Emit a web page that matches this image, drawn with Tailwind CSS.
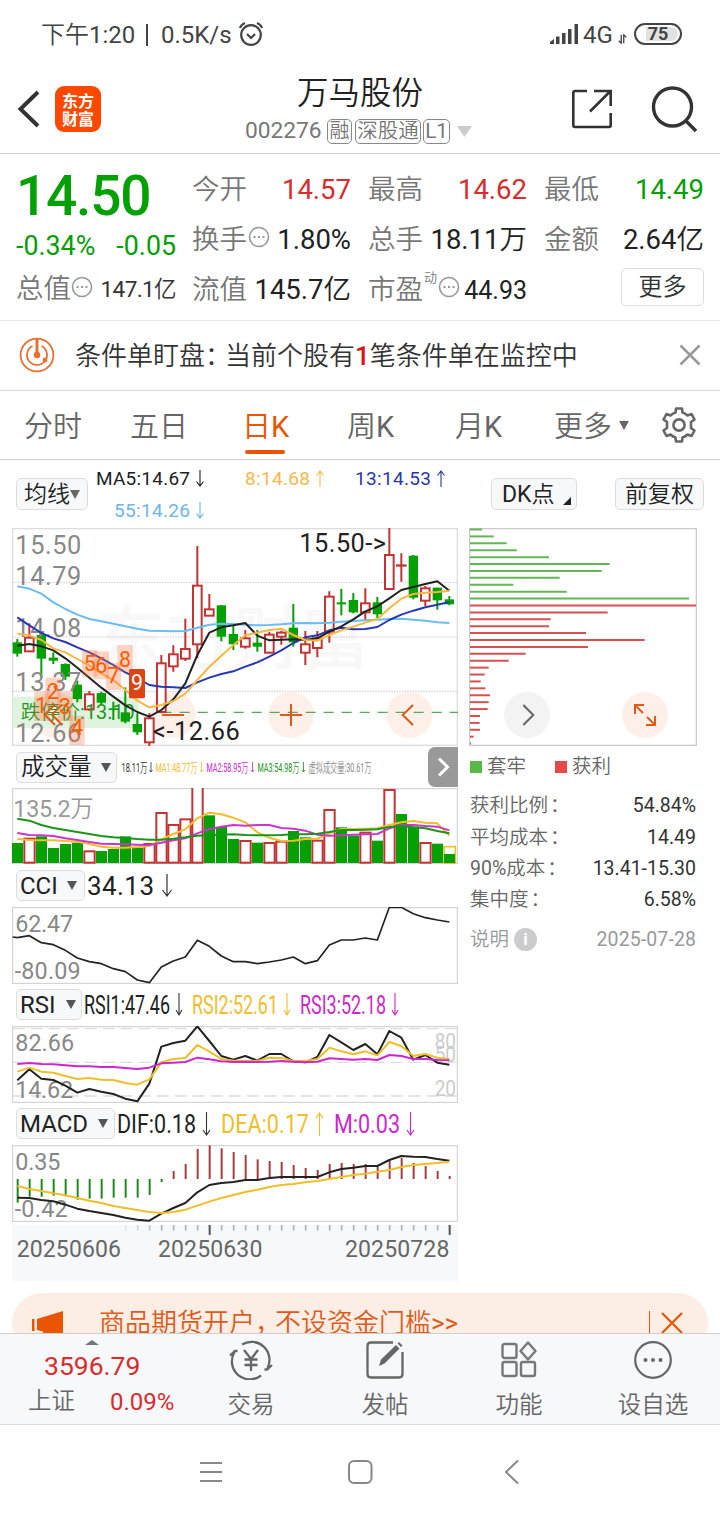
<!DOCTYPE html>
<html lang="zh-CN">
<head>
    <meta charset="UTF-8">
    <meta name="viewport" content="width=device-width, initial-scale=1.0">
    <title>万马股份 002276</title>
    <script src="https://cdn.jsdelivr.net/npm/@tailwindcss/browser@4"></script>
</head>
<body class="bg-white">
<div class="w-[720px] h-[1520px] overflow-hidden flex flex-col bg-white text-[#333] leading-none whitespace-nowrap font-normal font-['Roboto','Noto_Sans_CJK_SC_DemiLight','Noto_Sans_CJK_SC_Light','Noto_Sans_CJK_SC',sans-serif]">

    <!-- Status bar -->
    <div class="h-[70px] pl-[41px] pr-[38px] flex items-center shrink-0 text-[24px] text-[#444]">
        <span class="w-[95px]">下午1:20</span>
        <span class="w-0.5 h-[22px] bg-[#444] ml-2.5 mr-[13px]"></span>
        <span class="w-[75px]">0.5K/s</span>
        <svg class="w-7 h-7 ml-0.5 -mt-0.5" viewBox="0 0 28 28" fill="none" stroke="#444" stroke-width="2.2">
            <circle cx="13" cy="15" r="9.8"/><path d="M9 14l4 4 4-4M2 8a8 8 0 0 1 5-5M24 8a8 8 0 0 0-5-5"/>
        </svg>
        <svg class="w-[29px] h-5 ml-auto -mt-0.5" viewBox="0 0 29 20" fill="#444">
            <path d="M0 20v-2l4-3v5zM6 12.500h3.500V20H6zM12 9h3.500v11H12zM18 5h3.500v15H18zM24.500 0H28v20h-3.500z"/>
        </svg>
        <span class="ml-1 w-[32px]">4G</span>
        <svg class="w-[11px] h-[10px] mt-2 ml-0.5" viewBox="0 0 11 12" fill="none" stroke="#444" stroke-width="1.600"><path d="M4 1v10L1 8M7 11V1l3 3"/></svg>
        <span class="ml-[6px] -mt-0.5 w-[48px] h-[22px] border-[2.5px] border-[#444] rounded-full p-0.5 flex">
            <span class="flex-1 rounded-full bg-linear-to-r from-white from-20% to-[#e2e2e2] to-20% flex items-center justify-center text-[18px] font-bold">75</span>
        </span>
    </div>

    <!-- Header -->
    <div class="h-[84px] border-b border-[#d2d2d2] flex shrink-0 pl-[16px] pr-[21px]">
        <svg class="w-[26px] h-[40px] mt-[19px]" viewBox="0 0 26 40" fill="none" stroke="#333" stroke-width="4"><path d="M22 3L4.500 20 22 37"/></svg>
        <div class="w-[46px] h-[46px] ml-[13px] mt-[16px] rounded-[9px] bg-[#fd4900] text-white font-bold text-[16px] flex flex-col items-center justify-center gap-[2px] font-['Noto_Sans_CJK_SC',sans-serif]">
            <span>东方</span><span>财富</span>
        </div>
        <div class="ml-[144px] w-[227px] flex flex-col">
            <div class="text-[31.5px] h-[32px] mt-[8px] ml-[52px] text-[#222]">万马股份</div>
            <div class="flex items-center h-[26px] mt-[8px] text-[22.700px] text-[#777]">
                <span class="w-[77px]">002276</span>
                <span class="ml-[5px] w-[25px] h-[25px] border-[1.500px] border-[#888] rounded-[5px] text-[20px] flex items-center justify-center">融</span>
                <span class="ml-[3px] w-[66px] h-[25px] border-[1.500px] border-[#888] rounded-[5px] text-[20.500px] flex items-center justify-center">深股通</span>
                <span class="ml-[2px] w-[27px] h-[25px] border-[1.500px] border-[#888] rounded-[5px] text-[20.500px] flex items-center justify-center">L1</span>
                <svg class="w-[15px] h-[11px] ml-[7px] shrink-0" viewBox="0 0 15 11" fill="#ccc"><path d="M0 0h15L7.500 11z"/></svg>
            </div>
        </div>
        <svg class="w-[42px] h-[42px] ml-auto mt-[18px]" viewBox="0 0 42 42" fill="none" stroke="#333" stroke-width="2.600">
            <path d="M16 3H4q-1.700 0-1.700 1.700v32.600Q2.300 39 4 39h34q1.700 0 1.700-1.700V25M23 3h16.700v15M39.500 3L19 23.500"/>
        </svg>
        <svg class="w-[48px] h-[48px] ml-[38px] mt-[16px]" viewBox="0 0 48 48" fill="none" stroke="#333" stroke-width="3.400">
            <circle cx="21.500" cy="21" r="19"/><path d="M34.500 34.500L45 45"/>
        </svg>
    </div>

    <!-- Quote -->
    <div class="h-[167px] border-b border-[#e8e8e8] shrink-0 pl-[16px] pt-[10px] flex text-[27.500px] text-[#777]">
        <div class="w-[160px] flex flex-col">
            <div class="h-[65px] flex items-center text-[55px] font-medium text-[#04a004] tracking-[-1.2px]">14.50</div>
            <div class="h-[37px] -mt-px flex items-center justify-between text-[26.800px] text-[#04a004]"><span>-0.34%</span><span>-0.05</span></div>
            <div class="h-[46px] mt-px flex items-center justify-between">
                <span class="flex items-center">总值
                    <svg class="w-[22px] h-[22px] -mt-1" viewBox="0 0 22 22" fill="none" stroke="#999" stroke-width="1.600"><circle cx="11" cy="11" r="9.500"/><path d="M5.500 11h2m2.500 0h2m2.500 0h2" stroke-width="2"/></svg>
                </span>
                <span class="text-[22.500px] text-[#333] tracking-[-0.6px]">147.1亿</span>
            </div>
        </div>
        <div class="ml-[16px] pt-px w-[159px]">
            <div class="h-[50px] flex items-center justify-between">今开<span class="text-[#d92c2c]">14.57</span></div>
            <div class="h-[50px] flex items-center justify-between">
                <span class="flex items-center">换手
                    <svg class="w-[22px] h-[22px] -mt-1.5 ml-px" viewBox="0 0 22 22" fill="none" stroke="#999" stroke-width="1.600"><circle cx="11" cy="11" r="9.500"/><path d="M5.500 11h2m2.500 0h2m2.500 0h2" stroke-width="2"/></svg>
                </span>
                <span class="text-[#222]">1.80%</span>
            </div>
            <div class="h-[50px] flex items-center justify-between">流值<span class="text-[#222]">145.7亿</span></div>
        </div>
        <div class="ml-[17px] pt-px w-[159px]">
            <div class="h-[50px] flex items-center justify-between">最高<span class="text-[#d92c2c]">14.62</span></div>
            <div class="h-[50px] flex items-center justify-between">总手<span class="text-[#222]">18.11万</span></div>
            <div class="h-[50px] flex items-center justify-between">
                <span class="flex items-center">市盈<span class="text-[13px] -mt-[26px] ml-px">动</span>
                    <svg class="w-[22px] h-[22px] -mt-1.5 ml-px" viewBox="0 0 22 22" fill="none" stroke="#999" stroke-width="1.600"><circle cx="11" cy="11" r="9.500"/><path d="M5.500 11h2m2.500 0h2m2.500 0h2" stroke-width="2"/></svg>
                </span>
                <span class="text-[25px] text-[#222]">44.93</span>
            </div>
        </div>
        <div class="ml-[17px] pt-px w-[160px]">
            <div class="h-[50px] flex items-center justify-between">最低<span class="text-[#04a004]">14.49</span></div>
            <div class="h-[50px] flex items-center justify-between">金额<span class="text-[#222]">2.64亿</span></div>
            <div class="h-[46px] flex items-center justify-end">
                <span class="w-[83px] h-[38px] -mt-0.5 border border-[#ddd] rounded-[5px] text-[24px] text-[#333] flex items-center justify-center">更多</span>
            </div>
        </div>
    </div>

    <!-- Conditional order notice -->
    <div class="h-[70px] border-b border-[#d8d8d8] shrink-0 pl-[19px] pr-[19px] flex items-center text-[26px]">
        <svg class="w-9 h-9 -mt-0.5" viewBox="0 0 36 36" fill="none" stroke="#e8702e" stroke-width="1.800">
            <circle cx="18" cy="18" r="16.400"/><path d="M13.500 9a10 10 0 1 0 9 0"/><path d="M18 2v16" stroke-width="3"/><circle cx="18" cy="18" r="2.400" fill="#e8702e"/><circle cx="26" cy="23" r="1.500" fill="#e8702e"/>
        </svg>
        <span class="ml-[20px]">条件单盯盘</span><span class="w-5">：</span><span>当前个股有</span><span class="text-[#dd1111] font-medium">1</span><span>笔条件单在监控中</span>
        <svg class="w-[22px] h-[22px] ml-auto -mt-0.5" viewBox="0 0 22 22" fill="none" stroke="#999" stroke-width="2.500"><path d="M1.500 1.500l19 19M20.500 1.500l-19 19"/></svg>
    </div>

    <!-- Period tabs -->
    <div class="h-[69px] pt-[5px] border-b border-[#d2d2d2] shrink-0 flex items-center text-[29px] text-[#666] pl-[24px]">
        <span class="w-[106px]">分时</span>
        <span class="w-[112px]">五日</span>
        <span class="w-[105px] text-[#ea5504] relative">日K<span class="absolute left-[3px] top-[37px] w-[40px] h-[4px] rounded bg-[#ea5504]"></span></span>
        <span class="w-[108px]">周K</span>
        <span class="w-[99px]">月K</span>
        <span class="w-[58px]">更多</span>
        <svg class="w-[10px] h-[9px] ml-[7px] -mt-1" viewBox="0 0 11 10" fill="#666"><path d="M0 0h11L5.500 10z"/></svg>
        <svg class="w-[38px] h-[38px] ml-[31px] -mt-1.5" viewBox="0 0 38 38" fill="none" stroke="#666" stroke-width="2.600" stroke-linejoin="round">
            <path d="M15.500 6.500L16 2.500h6l.500 4q3 1 5 3l4-1.500 3 5.500-3.500 2.500v6l3.500 2.500-3 5.500-4-1.500q-2 2-5 3l-.500 4h-6l-.500-4q-3-1-5-3l-4 1.500-3-5.500L7 22v-6l-3.500-2.500 3-5.500 4 1.500q2-2 5-3z"/><circle cx="19" cy="19" r="5.600"/>
        </svg>
    </div>

    <!-- Moving average legend and chart options -->
    <div class="h-[68px] shrink-0 flex pl-[16px] pr-[16px] text-[23px] text-[#222]">
        <div class="w-[72px] h-[32px] mt-[18px] border border-[#ddd] bg-[#f7f8fa] rounded-[5px] flex items-center justify-center">均线<svg class="w-[10px] h-[9px]" viewBox="0 0 10 9" fill="#666"><path d="M0 0h10L5 9z"/></svg></div>
        <svg class="w-[372px] h-[68px]" viewBox="88 460 372 68" font-size="19">
            <text x="96" y="485" textLength="94" fill="#222">MA5:14.67</text>
            <text x="245" y="485" textLength="65" fill="#f8b84a">8:14.68</text>
            <text x="355" y="485" textLength="76" fill="#2838a8">13:14.53</text>
            <text x="114" y="517" textLength="76" fill="#6ab6ec">55:14.26</text>
            <g fill="none" stroke-width="1.100">
                <path d="M200 470v16m-3.500-4.500l3.500 4.500 3.500-4.500" stroke="#222"/>
                <path d="M320 487v-16m-3.500 4.500l3.500-4.500 3.500 4.500" stroke="#f8b84a"/>
                <path d="M441 487v-16m-3.500 4.500l3.500-4.500 3.500 4.500" stroke="#2838a8"/>
                <path d="M200 502v16m-3.500-4.500l3.500 4.500 3.500-4.500" stroke="#6ab6ec"/>
            </g>
        </svg>
        <div class="ml-[31px] w-[86px] h-[32px] mt-[18px] border border-[#ddd] bg-[#f7f8fa] rounded-[5px] flex items-center pl-[10px]">DK点<svg class="w-2 h-2 ml-[8px] mt-[14px]" viewBox="0 0 8 8" fill="#222"><path d="M8 0v8H0z"/></svg></div>
        <div class="ml-auto w-[89px] h-[32px] mt-[18px] border border-[#ddd] bg-[#f7f8fa] rounded-[5px] flex items-center justify-center">前复权</div>
    </div>

    <!-- Charts: every svg canvas uses three units per pixel -->
    <div class="flex shrink-0 h-[765px] pl-[12px]">
        <div class="w-[446px] flex flex-col">
            <svg class="w-[446px] h-[218px] shrink-0" viewBox="36 24 1338 654" font-size="76">
                <rect x="38" y="26" width="1334" height="650" fill="#fff" stroke="#ddd" stroke-width="4"/>
                <text x="290" y="430" font-size="205" font-weight="700" fill="#f8f8f8" textLength="820">东方财富</text>
                <path d="M38 187H1372M38 351H1372M38 514H1372" stroke="#c4c4c4" stroke-width="3" stroke-dasharray="4 4"/>
                <g fill="#fef0e9"><circle cx="165" cy="585" r="69"/><circle cx="519" cy="585" r="69"/><circle cx="873" cy="585" r="69"/><circle cx="1228" cy="585" r="69"/></g>
                <rect x="38" y="530" width="378" height="94" fill="#dff3df"/>
                <path d="M485 577H1374" stroke="#56a85a" stroke-width="4" stroke-dasharray="30 24"/>
                <g id="candles"></g>
                <text x="62" y="597" font-size="58" fill="#1f951f" textLength="342" lengthAdjust="spacingAndGlyphs">跌停价:13.10</text>
                <g fill="#888">
                    <text x="46" y="101" textLength="198">15.50</text><text x="46" y="195" textLength="198">14.79</text><text x="46" y="350" textLength="198">14.08</text><text x="46" y="514" textLength="198">13.37</text><text x="46" y="666" textLength="198">12.66</text>
                </g>
                <g id="priceLines" fill="none" stroke-width="6" stroke-linejoin="round"></g>
                <g fill="#fa6e3c" fill-opacity=".3">
                    <rect x="103" y="515" width="46" height="88"/><rect x="136" y="473" width="46" height="88"/><rect x="172" y="515" width="46" height="88"/><rect x="208" y="587" width="46" height="88"/><rect x="246" y="390" width="46" height="80"/><rect x="281" y="394" width="46" height="84"/><rect x="317" y="428" width="46" height="82"/><rect x="352" y="375" width="46" height="80"/>
                </g>
                <rect x="387" y="447" width="48" height="88" rx="5" fill="#de4314"/>
                <g font-size="64" fill="#ff5a00" text-anchor="middle">
                    <text x="124" y="580">1</text><text x="159" y="538">2</text><text x="195" y="583">3</text><text x="232" y="646">4</text><text x="269" y="454">5</text><text x="304" y="458">6</text><text x="340" y="490">7</text><text x="375" y="441">8</text><text x="411" y="511" fill="#fff">9</text>
                </g>
                <g fill="none" stroke="#dc5a1a" stroke-width="6">
                    <path d="M165 553l-31 31 31 31M187 553l-31 31 31 31M486 585h66M840 585h66M873 552v66M1239 555l-31 30 31 30"/>
                </g>
                <g fill="#222"><text x="898" y="95" textLength="260">15.50-&gt;</text><text x="459" y="661" textLength="260">&lt;-12.66</text></g>
            </svg>

            <!-- Volume -->
            <div class="h-[42px] shrink-0 flex">
                <div class="ml-1 mt-[6px] w-[101px] h-[31px] border border-[#ddd] bg-[#f7f8fa] rounded-[5px] flex items-center pl-[4px] text-[23.500px] text-[#222]">成交量<svg class="w-[10px] h-[9px] ml-[9px]" viewBox="0 0 10 9" fill="#555"><path d="M0 0h10L5 9z"/></svg></div>
                <svg class="w-[311px] h-[42px]" viewBox="117 746 311 42" font-size="13">
                    <text x="121.500" y="772" textLength="26" lengthAdjust="spacingAndGlyphs" fill="#333">18.11万</text>
                    <text x="155.500" y="772" textLength="42" lengthAdjust="spacingAndGlyphs" fill="#f0be28">MA1:48.77万</text>
                    <text x="206.500" y="772" textLength="42" lengthAdjust="spacingAndGlyphs" fill="#cc28cc">MA2:58.95万</text>
                    <text x="257.500" y="772" textLength="42" lengthAdjust="spacingAndGlyphs" fill="#1a941a">MA3:54.98万</text>
                    <text x="308.500" y="772" textLength="63" lengthAdjust="spacingAndGlyphs" fill="#888">虚拟成交量:30.61万</text>
                    <g fill="none" stroke-width=".8"><path d="M151 762v10l-1.500-2m1.500 2l1.500-2" stroke="#333"/><path d="M201.500 762v10l-1.500-2m1.500 2l1.500-2" stroke="#f0be28"/><path d="M252.500 762v10l-1.500-2m1.500 2l1.500-2" stroke="#cc28cc"/><path d="M303.500 762v10l-1.500-2m1.500 2l1.500-2" stroke="#1a941a"/></g>
                </svg>
                <div class="w-[30px] h-[40px] mt-[1px] rounded-l-[7px] bg-[#999] flex items-center justify-center"><svg class="w-[13px] h-[20px]" viewBox="0 0 13 20" fill="none" stroke="#fff" stroke-width="3"><path d="M2 1.500l8.500 8.500L2 18.500"/></svg></div>
            </div>
            <svg class="w-[446px] h-[76px] shrink-0" viewBox="36 129 1338 228" font-size="70">
                <rect x="38" y="131" width="1334" height="224" fill="none" stroke="#ccc" stroke-width="3"/>
                <g id="volumes"></g>
                <text x="40" y="215" fill="#999" textLength="241">135.2万</text>
                <g id="volumeLines" fill="none" stroke-width="6" stroke-linejoin="round"></g>
            </svg>

            <!-- CCI -->
            <div class="h-[43px] shrink-0 flex">
                <div class="ml-1 mt-[6px] w-[69px] h-[31px] border border-[#ddd] bg-[#f7f8fa] rounded-[5px] flex items-center pl-[3px] text-[24px] text-[#222]">CCI<svg class="w-[10px] h-[9px] ml-[9px]" viewBox="0 0 10 9" fill="#555"><path d="M0 0h10L5 9z"/></svg></div>
                <svg class="w-[370px] h-[43px]" viewBox="85 864 370 43" font-size="26">
                    <text x="87" y="895" textLength="67" fill="#222">34.13</text>
                    <path d="M167 874v22m-4.500-6l4.500 6 4.500-6" fill="none" stroke="#333" stroke-width="1.200"/>
                </svg>
            </div>
            <svg class="w-[446px] h-[77px] shrink-0" viewBox="36 21 1338 231" font-size="70">
                <rect x="38" y="23" width="1334" height="227" fill="none" stroke="#ccc" stroke-width="3"/>
                <g fill="#888"><text x="46" y="96" textLength="173">62.47</text><text x="44" y="237" textLength="198">-80.09</text></g>
                <g id="cciLines" fill="none" stroke-width="5" stroke-linejoin="round"></g>
            </svg>

            <!-- RSI -->
            <div class="h-[42px] shrink-0 flex">
                <div class="ml-1 mt-[5px] w-[66px] h-[31px] border border-[#ddd] bg-[#f7f8fa] rounded-[5px] flex items-center pl-[3px] text-[24px] text-[#222]">RSI<svg class="w-[10px] h-[9px] ml-[10px]" viewBox="0 0 10 9" fill="#555"><path d="M0 0h10L5 9z"/></svg></div>
                <svg class="w-[370px] h-[42px]" viewBox="82 984 370 42" font-size="26">
                    <text x="84" y="1014" textLength="86" lengthAdjust="spacingAndGlyphs" fill="#222">RSI1:47.46</text>
                    <text x="192" y="1014" textLength="86" lengthAdjust="spacingAndGlyphs" fill="#f0be28">RSI2:52.61</text>
                    <text x="300" y="1014" textLength="86" lengthAdjust="spacingAndGlyphs" fill="#cc28cc">RSI3:52.18</text>
                    <g fill="none" stroke-width="1.100"><path d="M179 993v22m-3-5l3 5 3-5" stroke="#333"/><path d="M287 993v22m-3-5l3 5 3-5" stroke="#f0be28"/><path d="M395 993v22m-3-5l3 5 3-5" stroke="#cc28cc"/></g>
                </svg>
            </div>
            <svg class="w-[446px] h-[77px] shrink-0" viewBox="36 378 1338 231" font-size="70">
                <rect x="38" y="380" width="1334" height="227" fill="none" stroke="#ccc" stroke-width="3"/>
                <path d="M38 386H1372M38 487H1372M38 588H1372" stroke="#ddd" stroke-width="4" stroke-dasharray="36 18"/>
                <g fill="#888"><text x="46" y="453" textLength="176">82.66</text><text x="46" y="594" textLength="173">14.62</text></g>
                <g fill="#ccc" font-size="66"><text x="1304" y="446" textLength="64" lengthAdjust="spacingAndGlyphs">80</text><text x="1304" y="485" textLength="64" lengthAdjust="spacingAndGlyphs">50</text><text x="1304" y="587" textLength="64" lengthAdjust="spacingAndGlyphs">20</text></g>
                <g id="rsiLines" fill="none" stroke-width="6" stroke-linejoin="round"></g>
            </svg>

            <!-- MACD -->
            <div class="h-[42px] shrink-0 flex">
                <div class="ml-1 mt-[5px] w-[99px] h-[31px] border border-[#ddd] bg-[#f7f8fa] rounded-[5px] flex items-center pl-[3px] text-[24px] text-[#222]">MACD<svg class="w-[10px] h-[9px] ml-[10px]" viewBox="0 0 10 9" fill="#555"><path d="M0 0h10L5 9z"/></svg></div>
                <svg class="w-[340px] h-[42px]" viewBox="115 1103 340 42" font-size="26">
                    <text x="117" y="1133" textLength="79" lengthAdjust="spacingAndGlyphs" fill="#222">DIF:0.18</text>
                    <text x="221" y="1133" textLength="88" lengthAdjust="spacingAndGlyphs" fill="#f0be28">DEA:0.17</text>
                    <text x="334" y="1133" textLength="66" lengthAdjust="spacingAndGlyphs" fill="#cc28cc">M:0.03</text>
                    <g fill="none" stroke-width="1.100"><path d="M206.500 1112v23m-3.500-5l3.500 5 3.500-5" stroke="#333"/><path d="M319.500 1136v-23m-3.500 5l3.500-5 3.500 5" stroke="#f0be28"/><path d="M410.500 1112v23m-3.500-5l3.500 5 3.500-5" stroke="#cc28cc"/></g>
                </svg>
            </div>
            <svg class="w-[446px] h-[136px] shrink-0" viewBox="36 135 1338 408" font-size="70">
                <rect x="38" y="137" width="1334" height="227" fill="none" stroke="#ccc" stroke-width="3"/>
                <rect x="36" y="375" width="1338" height="168" fill="#f7f8fa"/>
                <g id="macdBars" stroke-width="6"></g>
                <g fill="#888"><text x="46" y="210" textLength="135">0.35</text><text x="44" y="351" textLength="159">-0.42</text></g>
                <g id="macdLines" fill="none" stroke-width="6" stroke-linejoin="round"></g>
                <g fill="#666" font-size="69"><text x="50" y="471" textLength="313">20250606</text><text x="474" y="471" textLength="313">20250630</text><text x="1035" y="471" textLength="313">20250728</text></g>
            </svg>
        </div>

        <!-- Cost distribution -->
        <div class="ml-[11px] w-[228px] flex flex-col">
            <svg class="w-[228px] h-[218px] shrink-0" viewBox="27 24 684 654">
                <rect x="29" y="26" width="680" height="650" fill="none" stroke="#ccc" stroke-width="4"/>
                <g id="chips" stroke-width="6"></g>
                <circle cx="201" cy="585" r="69" fill="#f3f3f3"/><path d="M190 555l30 30-30 30" fill="none" stroke="#666" stroke-width="6"/>
                <circle cx="555" cy="585" r="69" fill="#fef0e9"/><path d="M525 582v-27h27M526 556l23 23M585 588v27h-27M584 614l-23-23" fill="none" stroke="#dc5a1a" stroke-width="6"/>
            </svg>
            <div class="h-[41px] shrink-0 flex items-center text-[19.500px] text-[#666] pl-[1px]">
                <span class="w-3 h-3 bg-[#58b848] mr-[5px]"></span>套牢
                <span class="w-3 h-3 bg-[#e84848] ml-[29px] mr-[5px]"></span>获利
            </div>
            <div class="grid gap-[7.400px] mt-[7px] pl-[1px] pr-[1px] text-[19.500px] text-[#666]">
                <div class="h-6 flex items-center">获利比例<span class="ml-0.5">：</span><span class="text-[#333] ml-auto">54.84%</span></div>
                <div class="h-6 flex items-center">平均成本<span class="ml-0.5">：</span><span class="text-[#333] ml-auto">14.49</span></div>
                <div class="h-6 flex items-center">90%成本<span class="ml-0.5">：</span><span class="text-[#333] ml-auto">13.41-15.30</span></div>
                <div class="h-6 flex items-center">集中度<span class="ml-0.5">：</span><span class="text-[#333] ml-auto">6.58%</span></div>
                <div class="h-6 mt-[8px] flex items-center text-[#999]">说明
                    <span class="w-[23px] h-[23px] ml-[5px] rounded-full bg-[#ccc] text-white text-[17px] font-bold flex items-center justify-center">i</span>
                    <span class="ml-auto tracking-[0.1px]">2025-07-28</span>
                </div>
            </div>
        </div>
    </div>

    <!-- Promotion, cut off by the tab bar -->
    <div class="h-[40px] shrink-0 mx-[12px] overflow-hidden">
        <div class="h-[60px] rounded-[30px] bg-[#fceee5] flex items-center pl-[20px] pr-[25px] text-[26px] text-[#dc5c1c]">
            <svg class="w-[32px] h-[32px] mt-[6px]" viewBox="0 0 32 32" fill="#ea5504"><path d="M0 9h2.500v12H0zM5 9L31 1v25l-10-2.500-2 6-8-2v-6L5 20z"/></svg>
            <span class="ml-[35px]">商品期货开户</span><span class="w-[20px]">，</span><span>不设资金门槛&gt;&gt;</span>
            <span class="ml-auto w-px h-[24px] bg-[#dc5c1c]"></span>
            <svg class="w-[22px] h-[22px] ml-[11px]" viewBox="0 0 22 22" fill="none" stroke="#ea5504" stroke-width="2.200"><path d="M1 1l20 20M21 1L1 21"/></svg>
        </div>
    </div>

    <!-- Tab bar -->
    <div class="h-[92px] shrink-0 bg-[#f7f8fa] border-t border-t-[#cfcfcf] border-b border-b-[#ddd] flex text-[23.500px] text-[#666]">
        <div class="w-[184px] flex flex-col pt-[6px]">
            <svg class="w-[14px] h-[5px] ml-[85px]" viewBox="0 0 14 5" fill="#777"><path d="M0 5L7 0l7 5z"/></svg>
            <span class="text-[26.500px] text-[#d92c2c] h-[36px] leading-[42px] ml-[44px]">3596.79</span>
            <div class="flex ml-[28px] mt-[7px] h-[28px] items-center"><span>上证</span><span class="ml-[35px] text-[24px] text-[#d92c2c]">0.09%</span></div>
        </div>
        <div class="w-[134px] flex flex-col items-center pt-[6px] gap-[14px]">
            <svg class="w-[44px] h-[40px]" viewBox="0 0 44 40" fill="none" stroke="#666" stroke-width="2.300">
                <path d="M13 4.500A18 18 0 0 1 38.500 28M35.500 29.500l2.500 0 5-4.500M32 35.500A18 18 0 0 1 5.500 12M1 15.500l5-4.500h2.500M15 10l7 9 7-9M22 19v12M15.500 19.500h13M15.500 25h13"/>
            </svg>交易
        </div>
        <div class="w-[134px] flex flex-col items-center pt-[6px] gap-[14px]">
            <svg class="w-[40px] h-[40px]" viewBox="0 0 40 40" fill="none" stroke="#666" stroke-width="2.300">
                <path d="M28 2.500H6Q2.500 2.500 2.500 6v28Q2.500 37.500 6 37.500h28q3.500 0 3.500-3.500V12"/><path d="M14 26l2-6.500L31 5l3.500 3.500-15 15zM32.500 3.500l1.500-1.500 3.500 3.500L36 7z" fill="#666" stroke="none"/>
            </svg>发帖
        </div>
        <div class="w-[134px] flex flex-col items-center pt-[6px] gap-[14px]">
            <svg class="w-[36px] h-[40px]" viewBox="0 0 36 40" fill="none" stroke="#777" stroke-width="2.400" stroke-linejoin="round">
                <rect x="1.500" y="4" width="14" height="14" rx="2"/><rect x="1.500" y="22" width="14" height="14" rx="2"/><rect x="20" y="22" width="14" height="14" rx="2"/><path d="M27 2.500l7.500 8.500-7.500 8.500-7.500-8.500z"/>
            </svg>功能
        </div>
        <div class="w-[134px] flex flex-col items-center pt-[6px] gap-[14px]">
            <svg class="w-[40px] h-[40px]" viewBox="0 0 40 40" fill="none" stroke="#666" stroke-width="2.200">
                <circle cx="20" cy="20" r="17.800"/><g fill="#666" stroke="none"><circle cx="12.500" cy="20" r="2"/><circle cx="20" cy="20" r="2"/><circle cx="27.500" cy="20" r="2"/></g>
            </svg>设自选
        </div>
    </div>

    <!-- System navigation -->
    <div class="h-[95px] shrink-0 flex items-center justify-center">
        <svg class="w-[320px] h-[26px] -mt-0.5" viewBox="200 1459 320 26" fill="none" stroke="#888" stroke-width="2">
            <path d="M200 1463h22M200 1472h22M200 1481h22"/><rect x="349" y="1461" width="22.500" height="22" rx="5"/><path d="M518 1460.500l-12 11.500 12 11.500"/>
        </svg>
    </div>
</div>

<script>
    const RED = "#c43434", GREEN = "#04a004";
    const x = i => 52 + 36 * i;
    const $ = id => document.getElementById(id);

    // [rising, body top, body bottom, wick top, wick bottom]
    const candles = [
        [0,367,401,357,410],[1,353,394,310,394],[0,345,416,338,470],[0,413,422,397,432],[0,432,470,430,480],[0,494,537,482,547],
        [1,523,568,513,572],[0,519,548,515,556],[0,565,570,545,600],[0,577,605,502,610],[0,612,637,580,645],[1,595,667,580,678],
        [1,430,576,405,580],[1,403,439,376,455],[1,387,416,296,423],[1,197,373,78,414],[1,268,287,222,287],[0,256,350,255,364],
        [0,342,373,318,390],[1,355,380,330,386],[0,368,380,330,395],[1,344,398,335,400],[1,338,350,332,374],[0,323,367,252,380],
        [1,373,398,333,435],[1,355,384,333,412],[1,230,335,214,368],[0,247,253,207,286],[0,240,277,219,280],[1,250,277,205,303],
        [0,247,283,231,295],[1,105,207,24,207],[1,136,137,100,185],[0,107,233,105,238],[1,205,242,198,258],[0,203,241,203,269],[0,238,253,228,256]
    ];
    $("candles").innerHTML = candles.map(([up, t, b, hi, lo], i) => up
        ? `<path d="M${x(i)} ${hi}V${t}M${x(i)} ${b}V${lo}" stroke="${RED}" stroke-width="6"/><rect x="${x(i) - 13}" y="${t}" width="26" height="${b - t}" fill="#fff" stroke="${RED}" stroke-width="6"/>`
        : `<path d="M${x(i)} ${hi}V${lo}" stroke="${GREEN}" stroke-width="6"/><rect x="${x(i) - 14}" y="${t}" width="28" height="${b - t}" fill="${GREEN}"/>`).join("");

    // [rising, bar top]
    const volumes = [[0,294],[1,281],[0,274],[0,309],[0,297],[0,293],[1,319],[0,318],[0,312],[0,274],[0,308],[1,297],[1,204],[1,240],[1,223],[1,110],[0,211],[0,246],[0,282],
        [1,288],[0,293],[1,294],[1,290],[0,258],[0,277],[1,287],[1,195],[0,247],[0,272],[1,263],[0,287],[1,135],[0,207],[0,245],[1,294],[0,296],[0,327]];
    $("volumes").innerHTML = `<rect x="${x(36) - 16}" y="305" width="34" height="49" fill="none" stroke="#f0be28" stroke-width="5"/>` + volumes.map(([up, t], i) => up
        ? `<rect x="${x(i) - 15}" y="${t}" width="31" height="${353 - t}" fill="#fff" stroke="${RED}" stroke-width="6"/>`
        : `<rect x="${x(i) - 16}" y="${t}" width="33" height="${354 - t}" fill="${GREEN}"/>`).join("");

    function lines(id, series) {
        $(id).innerHTML = series.map(([color, ys]) => `<polyline stroke="${color}" points="${ys.map((y, i) => x(i) + "," + y).join(" ")}"/>`).join("");
    }

    lines("priceLines", [
        ["#6cbcf4", [199,206,221,247,267,284,297,304,311,319,326,332,333,334,333,323,314,311,312,314,316,315,313,310,309,310,308,305,303,301,299,297,296,299,302,307,309]],
        ["#2838b0", [292,316,339,355,366,382,397,415,435,457,474,495,500,502,504,487,473,462,454,440,427,410,391,369,352,346,331,323,328,327,321,300,284,272,262,254,246]],
        ["#222", [377,372,379,391,415,443,473,503,530,556,576,590,570,538,490,405,338,322,316,309,347,361,359,358,359,355,335,319,298,274,259,235,210,201,192,184,212]],
        ["#f8b840", [341,346,360,385,397,417,437,460,480,510,542,562,555,543,521,480,440,407,375,346,338,330,326,345,360,362,345,331,320,308,297,265,236,222,218,216,212]]
    ]);
    lines("volumeLines", [
        ["#f0be28", [282,285,286,286,288,290,297,305,308,308,306,303,283,267,253,220,203,208,218,232,262,278,288,287,282,281,265,252,252,251,250,240,232,228,233,235,272]],
        ["#cc34cc", [264,270,271,273,280,285,291,296,297,298,299,300,293,286,280,265,252,245,240,242,240,240,249,251,257,269,272,271,269,268,267,250,240,240,243,245,256]],
        ["#1a941a", [221,227,240,249,255,261,267,273,277,279,282,284,284,281,277,272,270,269,268,270,271,271,270,268,268,266,261,255,255,254,253,246,243,247,250,258,265]]
    ]);
    lines("cciLines", [
        ["#222", [113,107,128,134,151,174,185,191,206,215,240,248,201,183,171,121,139,168,185,185,191,186,180,171,191,182,135,120,120,114,120,22,22,41,53,60,66]]
    ]);
    $("cciLines").innerHTML += `<path d="M38 111L52 113" stroke="#222"/>`;
    lines("rsiLines", [
        ["#222", [541,508,536,540,557,578,567,575,582,596,604,551,440,429,422,379,423,468,479,468,482,462,462,484,487,471,405,427,450,432,463,393,413,479,465,488,494]],
        ["#f0be28", [515,503,515,518,528,537,534,539,540,549,554,538,487,477,474,435,455,477,482,482,483,473,474,483,483,477,443,454,463,454,466,426,438,468,462,473,477]],
        ["#cc28cc", [492,489,492,493,496,499,499,501,501,504,507,503,490,488,486,473,478,484,486,485,486,485,483,485,487,485,475,477,479,477,480,465,468,477,477,480,481]]
    ]);
    lines("macdLines", [
        ["#222", [293,294,300,304,314,326,333,339,345,353,359,362,341,324,309,277,255,249,246,240,240,234,231,231,231,231,217,207,203,198,198,180,168,170,171,177,182]],
        ["#f0be28", [258,267,273,280,286,294,302,309,318,324,330,336,339,336,329,317,305,294,285,276,269,261,255,252,247,243,237,231,225,221,215,210,201,195,192,189,185]]
    ]);

    const macd = [308,290,290,287,289,299,296,296,293,293,293,285,246,213,192,147,136,145,156,165,178,183,186,195,204,210,192,189,192,192,200,180,174,189,198,213,228];
    $("macdBars").innerHTML = macd.map((y, i) => `<path d="M${x(i) + 1} 237V${y}" stroke="${y > 237 ? "#1a8a1a" : "#a83c3c"}"/>`).join("")
        + macd.map((y, i) => i < 9 ? "" : i === 16 || i === 36
            ? `<path d="M${x(i) + 1} 375V405" stroke="#555"/>`
            : `<path d="M${x(i) + 1} 375V392" stroke="#b4b4b4" stroke-width="5" opacity="${Math.min(1, (i - 8) / 4)}"/>`).join("");

    const chips = [66,101,140,170,267,449,425,299,160,320,687,708,443,272,267,378,554,384,197,146,86,74,62,76,90,86,83,60,59,60,41,33];
    $("chips").innerHTML = chips.map((end, i) => `<path d="M30 ${28.500 + 20.720 * i}H${end}" stroke="${i < 11 ? "#62b654" : "#d85050"}"/>`).join("");
</script>
</body>
</html>
